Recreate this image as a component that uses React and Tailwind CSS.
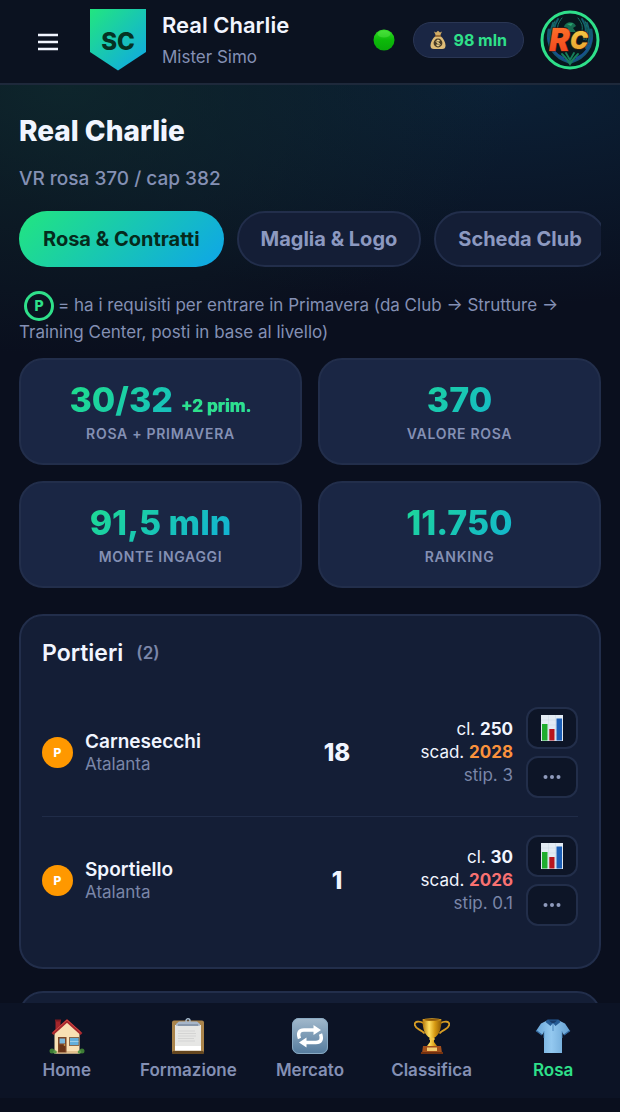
import React, { useState } from 'react';

const tabs = ['Rosa & Contratti', 'Maglia & Logo', 'Scheda Club'];

const stats = [
    { value: '30/32', extra: '+2 prim.', label: 'Rosa + Primavera' },
    { value: '370', label: 'Valore Rosa' },
    { value: '91,5 mln', label: 'Monte Ingaggi' },
    { value: '11.750', label: 'Ranking' },
];

const keepers = [
    { name: 'Carnesecchi', team: 'Atalanta', rating: 18, clause: '250', expiry: '2028', salary: '3', expiryClass: 'text-[#fb923c]' },
    { name: 'Sportiello', team: 'Atalanta', rating: 1, clause: '30', expiry: '2026', salary: '0.1', expiryClass: 'text-[#f87171]' },
];

const HomeIcon = () => (
    <svg viewBox="0 0 36 36" className="h-9 w-9" aria-hidden="true">
        <path d="M6.5 2h5v11h-5z" fill="#a5262b" />
        <path d="M6 1.5h6v2H6z" fill="#7d1a20" />
        <path d="M5.500 15 18 3.500 30.500 15V35.500H5.500z" fill="#f8e0b4" />
        <path d="M5.500 33h25v2.500h-25z" fill="#e2c08d" />
        <path d="M3.500 16 18 3l14.500 13" fill="none" stroke="#a8282d" strokeWidth="2.800" />
        <path d="M4.500 14 18 2l13.500 12" fill="none" stroke="#cf4a44" strokeWidth="1" />
        <path d="M9 19h8.500v15.500H9z" fill="#7c4526" />
        <path d="M10.500 20.500h5.500v5h-5.500z" fill="#79b7dc" />
        <path d="M10.500 27h5.500v7h-5.500z" fill="#693417" />
        <circle cx="15.500" cy="27" r=".8" fill="#e7bd55" />
        <path d="M20 19h10.500v9H20z" fill="#8a6a4c" />
        <path d="M21 20h8.500v7H21z" fill="#62aedb" />
        <path d="M21 23.500h8.500" stroke="#a7d5ec" strokeWidth=".8" />
        <circle cx="3" cy="33" r="2.500" fill="#3d7c35" />
        <circle cx="6" cy="34" r="1.800" fill="#59994a" />
        <circle cx="33" cy="33" r="2.500" fill="#3d7c35" />
        <circle cx="30.500" cy="34" r="1.800" fill="#59994a" />
    </svg>
);

const ClipboardIcon = () => (
    <svg viewBox="0 0 36 36" className="h-9 w-9" aria-hidden="true">
        <rect x="2" y="2.500" width="32" height="33.500" rx="2" fill="#aa844b" />
        <rect x="2" y="33" width="32" height="3" rx="1.500" fill="#654720" />
        <path d="M5 7h26v25.500H5z" fill="#e6e6e4" />
        <path d="M5 28h26v4.500H5z" fill="#fff" />
        <path d="M8 13h17M8 15.500h18M8 18h18M8 20.500h16M8 23h17" stroke="#d4d4d3" strokeWidth="1.200" />
        <circle cx="18" cy="2.800" r="2" fill="none" stroke="#a9bdd0" strokeWidth="1.400" />
        <path d="M9 3.500h18l3 2.500c.5 1-.2 2-1.500 2h-21C6 8 5.500 7 6 6z" fill="#a7b6c9" />
        <path d="M8 7h20" stroke="#69798d" strokeWidth="1" />
    </svg>
);

const RepeatIcon = () => (
    <svg viewBox="0 0 36 36" className="h-9 w-9" aria-hidden="true">
        <defs>
            <linearGradient id="repeat-bg" x2="0" y2="1">
                <stop stopColor="#a2b9cc" />
                <stop offset="1" stopColor="#557b9d" />
            </linearGradient>
        </defs>
        <rect width="36" height="36" rx="7" fill="url(#repeat-bg)" />
        <rect x=".5" y=".5" width="35" height="35" rx="6.500" fill="none" stroke="#89a9c2" />
        <path d="M7.500 20.500c-2-5-.5-8.500 4.500-8.500h11M28.500 16c2 5 .5 8.500-4.500 8.500H13" fill="none" stroke="#fff" strokeWidth="3.400" />
        <path d="m21.500 7 7.500 5-7.500 5zM14.500 19.500v10l-7.500-5z" fill="#fff" />
    </svg>
);

const TrophyIcon = () => (
    <svg viewBox="0 0 36 36" className="h-9 w-9" aria-hidden="true">
        <defs>
            <linearGradient id="cup" x2="1" y2="0">
                <stop stopColor="#b17508" />
                <stop offset=".35" stopColor="#ffe061" />
                <stop offset=".65" stopColor="#d79a12" />
                <stop offset="1" stopColor="#8c5804" />
            </linearGradient>
        </defs>
        <path d="M9.500 5C5 2.500 0 3.500.8 7c.8 4.500 6 4 9.700 8.500M26.500 5C31 2.500 36 3.500 35.200 7c-.8 4.500-6 4-9.700 8.500" fill="none" stroke="#d79d25" strokeWidth="1.800" />
        <path d="M8.500 1.500h19c0 9-2 15.500-7.500 18.500v4l3 4H13l3-4v-4C10.500 17 8.500 10.500 8.500 1.500z" fill="url(#cup)" />
        <ellipse cx="18" cy="1.800" rx="9.500" ry="1.500" fill="#e6ac28" />
        <ellipse cx="18" cy="1.900" rx="8" ry=".8" fill="#875205" />
        <ellipse cx="18" cy="21" rx="3" ry="1.300" fill="#f2c444" />
        <path d="M9 28h18l1 7H8z" fill="#a34f1b" />
        <path d="M13 29.500h10v3.500H13z" fill="#f1cb70" />
        <path d="M7 34h22v2H7z" fill="#74310f" />
    </svg>
);

const ShirtIcon = () => (
    <svg viewBox="0 0 36 36" className="h-9 w-9" aria-hidden="true">
        <defs>
            <linearGradient id="shirt" x2="1" y2="0">
                <stop stopColor="#69a6d8" />
                <stop offset=".45" stopColor="#94c9f0" />
                <stop offset="1" stopColor="#649fd0" />
            </linearGradient>
        </defs>
        <path d="M12 2.500h12l6 3L35 13l-6 4-2-3v21H9V14l-2 3-6-4 5-7.500z" fill="url(#shirt)" />
        <path d="M1 12.500 7 17M35 12.500 29 17" stroke="#34699f" strokeWidth="1.200" />
        <path d="M12.500 1.500h11l2 2.500-5 4-2.500-3-2.500 3-5-4z" fill="#255b94" />
        <path d="M14 2.500h8L18 6z" fill="#173a68" />
        <path d="M18 5v8" stroke="#4c86bd" strokeWidth="1" />
        <path d="M9 13v7M27 13v7" stroke="#5794c9" strokeWidth=".8" />
    </svg>
);

const MoneyBagIcon = () => (
    <svg viewBox="0 0 16 20" className="h-5 w-4" aria-hidden="true">
        <path d="M4 1.500 6 2.500 8 .8l2 1.700 2-1-2 4.500H6z" fill="#d1ac65" />
        <path d="M5.500 6h5c3 2.500 5 6 5 9.500 0 2.500-1 3.500-3.500 3.500H4C1.500 19 .5 18 .5 15.500.5 12 2.500 8.500 5.500 6z" fill="#dfbd78" />
        <path d="M5 6h6" stroke="#8d5d29" strokeWidth="1.500" />
        <circle cx="8" cy="13" r="4.400" fill="#483b26" />
        <path d="M10 11.200C9.500 10.200 6.200 10 6.200 11.600c0 1.700 3.800 1 3.800 2.800 0 1.600-3.500 1.500-4 .2M8 9.500v7" fill="none" stroke="#efd48f" strokeWidth="1" />
    </svg>
);

const ChartIcon = () => (
    <svg viewBox="0 0 22 26" className="h-[26px] w-[22px]" aria-hidden="true">
        <path d="M0 0h22v26H0z" fill="#e3ebf4" />
        <path d="M0 5h22M0 10h22M0 15h22M0 20h22M7.500 0v26M14.500 0v26" stroke="#c8d6e5" strokeWidth=".5" />
        <path d="M1 9h5.500v16.500H1z" fill="#1fae2e" />
        <path d="M8.300 14h5.200v11.500H8.300z" fill="#b9151d" />
        <path d="M15.500 3.500H21v22h-5.500z" fill="#1b5fb8" />
    </svg>
);

const ClubLogo = () => (
    <svg viewBox="0 0 60 60" className="h-[60px] w-[60px]" role="img" aria-label="RC">
        <defs>
            <linearGradient id="logo-r" x2="0" y2="1">
                <stop stopColor="#ff7a2a" />
                <stop offset="1" stopColor="#ee3d1c" />
            </linearGradient>
            <linearGradient id="logo-c" x2="0" y2="1">
                <stop stopColor="#f6cf48" />
                <stop offset="1" stopColor="#e79a2b" />
            </linearGradient>
        </defs>
        <circle cx="30" cy="30" r="28" fill="#07171d" stroke="#2fe08a" strokeWidth="3" />
        <g fill="none" strokeLinecap="round">
            <path d="M9 20c-3 16 6 28 20 32M51 20c3 16-6 28-20 32" stroke="#145873" strokeWidth="3" />
            <path d="M13 13c-4 10-3 18 1 25M18 9c-5 8-5 14-2 20M47 13c4 10 3 18-1 25M42 9c5 8 5 14 2 20" stroke="#125f6c" strokeWidth="2" />
            <path d="M8 28c2 10 8 17 16 20M52 28c-2 10-8 17-16 20M11 35c3 7 9 13 16 16M49 35c-3 7-9 13-16 16" stroke="#185090" strokeWidth="1.500" />
            <path d="M15 11c-3 7-3 13-1 19M45 11c3 7 3 13 1 19M22 8c-4 5-5 8-4 13M38 8c4 5 5 8 4 13" stroke="#1a7868" strokeWidth="1" />
            <path d="M22 44c3 3 6 6 8 10 2-4 5-7 8-10M26 43l4 7 4-7" stroke="#17805b" strokeWidth="1.800" />
        </g>
        <path d="M24 17c1-5 9-7 12-1l-3 2 3 4H24l4-4z" fill="#176c50" />
        <path d="m27 14 6-1-2 3z" fill="#2daa72" />
        <text x="9" y="41" fontFamily="Inter, sans-serif" fontSize="31" fontWeight="900" fontStyle="italic" fill="url(#logo-r)" stroke="#54150c" strokeWidth="1" paintOrder="stroke">R</text>
        <text x="30" y="39" fontFamily="Inter, sans-serif" fontSize="24" fontWeight="900" fontStyle="italic" fill="url(#logo-c)" stroke="#3c2110" strokeWidth="1.500" paintOrder="stroke">C</text>
    </svg>
);

const navItems = [
    { name: 'Home', icon: HomeIcon },
    { name: 'Formazione', icon: ClipboardIcon },
    { name: 'Mercato', icon: RepeatIcon },
    { name: 'Classifica', icon: TrophyIcon },
    { name: 'Rosa', icon: ShirtIcon },
];

const Header = () => (
    <header className="flex h-[85px] shrink-0 items-center border-b-2 border-[#1e293b] bg-[#0b1220] pr-5 pb-1 pl-8">
        <button className="flex h-8 w-8 items-center justify-center text-[#f1f5ff]" aria-label="Menu">
            <svg viewBox="0 0 20 18" className="mt-1 h-[18px] w-5" fill="none" stroke="currentColor" strokeWidth="2.600" aria-hidden="true">
                <path d="M0 2h20M0 9h20M0 16h20" />
            </svg>
        </button>
        <div className="ml-[26px] flex h-[62px] w-14 shrink-0 items-center justify-center bg-[linear-gradient(135deg,#22e67f,#0ea5e9)] pt-1 text-2xl font-extrabold text-[#053223] [clip-path:polygon(0_0,100%_0,100%_70%,50%_100%,0_70%)]">
            SC
        </div>
        <div className="ml-4 min-w-0 flex-1 pt-0.5">
            <p className="truncate text-[22px] leading-8 font-semibold text-[#f1f5ff]">Real Charlie</p>
            <p className="truncate text-[17px] leading-8 text-[#8490b4]">Mister Simo</p>
        </div>
        <svg viewBox="0 0 22 22" className="h-[22px] w-[22px] shrink-0" role="img" aria-label="Online">
            <defs>
                <linearGradient id="online" x2="0" y2="1">
                    <stop stopColor="#35dc28" />
                    <stop offset=".5" stopColor="#0cba09" />
                    <stop offset="1" stopColor="#09a80a" />
                </linearGradient>
            </defs>
            <circle cx="11" cy="11" r="10.500" fill="url(#online)" />
            <ellipse cx="11" cy="5" rx="6.500" ry="3.500" fill="#6cf05c" opacity=".35" />
        </svg>
        <div className="ml-[18px] flex h-9 items-center gap-2 rounded-full border border-[#2a3654] bg-[#1a2644] px-4 text-base font-bold whitespace-nowrap text-[#2fe08a]">
            <MoneyBagIcon />
            98 mln
        </div>
        <button className="ml-4 shrink-0" aria-label="Profilo">
            <ClubLogo />
        </button>
    </header>
);

const StatCard = ({ value, extra, label }) => (
    <div className="rounded-3xl border-2 border-[#222e4b] bg-[#1a2644] px-5 pt-[18px] pb-[17px] text-center">
        <p className="bg-[linear-gradient(135deg,#22e67f,#0ea5e9)] bg-clip-text text-[34px] leading-[44px] font-extrabold text-transparent">
            {value}
            {extra && <span className="ml-2 text-[17px] leading-none text-[#2fe08a]">{extra}</span>}
        </p>
        <p className="text-sm leading-6 font-semibold tracking-wider text-[#8490b4] uppercase">{label}</p>
    </div>
);

const PlayerRow = ({ player }) => (
    <li className="flex items-center border-b border-[#202c48] py-[18px] last:border-b-0">
        <span className="flex h-[31px] w-[31px] shrink-0 items-center justify-center rounded-full bg-[#ff9800] text-xs font-extrabold text-white">P</span>
        <div className="ml-3 min-w-0 flex-1">
            <p className="truncate text-[19px] leading-[22px] font-semibold text-[#f1f5ff]">{player.name}</p>
            <p className="truncate text-[17px] leading-[22px] text-[#7a86a8]">{player.team}</p>
        </div>
        <span className="w-14 shrink-0 text-center text-2xl font-extrabold text-[#f1f5ff]">{player.rating}</span>
        <div className="w-[148px] shrink-0 text-right text-[17px] leading-[23px] text-[#f1f5ff]">
            <p>cl. <b>{player.clause}</b></p>
            <p>scad. <b className={player.expiryClass}>{player.expiry}</b></p>
            <p className="text-[#7a86a8]">stip. {player.salary}</p>
        </div>
        <div className="ml-[13px] flex shrink-0 flex-col gap-[7px]">
            <button className="flex h-[42px] w-[52px] items-center justify-center rounded-xl border-2 border-[#222e4a] bg-[#0d1527]" aria-label="Statistiche">
                <ChartIcon />
            </button>
            <button className="flex h-[42px] w-[52px] items-center justify-center rounded-xl border-2 border-[#222e4a] bg-[#0d1527] text-[#8f9bbd]" aria-label="Altro">
                <svg viewBox="0 0 18 4" className="h-1 w-[18px]" fill="currentColor" aria-hidden="true">
                    <circle cx="2.500" cy="2" r="2" />
                    <circle cx="9" cy="2" r="2" />
                    <circle cx="15.500" cy="2" r="2" />
                </svg>
            </button>
        </div>
    </li>
);

const App = () => {
    const [activeTab, setActiveTab] = useState(tabs[0]);

    return (
        <div className="flex h-screen flex-col overflow-hidden bg-[#0a0f1e] font-[Inter,sans-serif]">
            <Header />

            <main className="min-h-0 flex-1 overflow-y-auto bg-[radial-gradient(ellipse_460px_270px_at_10%_0,#0f2a2ecc_0%,transparent_100%),radial-gradient(ellipse_560px_220px_at_80%_0,#0b2036_0%,transparent_100%)] px-[19px] pt-[26px] [scrollbar-width:none]">
                <h1 className="text-[28px] leading-10 font-extrabold text-[#f1f5ff]">Real Charlie</h1>
                <p className="mt-4 text-[19px] leading-6 font-medium text-[#8490b4]">VR rosa 370 / cap 382</p>

                <div className="mt-5 flex gap-[13px] overflow-x-auto [scrollbar-width:none]">
                    {tabs.map((tab) => (
                        <button
                            key={tab}
                            onClick={() => setActiveTab(tab)}
                            className={`h-14 shrink-0 rounded-full border-2 px-[22px] text-xl font-bold ${
                                tab === activeTab
                                    ? 'border-transparent bg-[linear-gradient(135deg,#22e67f,#0ea5e9)] bg-origin-border text-[#052a1c]'
                                    : 'border-[#222e4b] bg-[#141e36] text-[#8c99c0]'
                            }`}
                        >
                            {tab}
                        </button>
                    ))}
                </div>

                <p className="mt-[25px] text-[17px] leading-[27px] text-[#8490b4]">
                    <span className="-my-1 mr-1 ml-[5px] inline-flex h-[30px] w-[30px] items-center justify-center rounded-full border-3 border-[#2fe08a] align-middle text-sm leading-none font-extrabold text-[#2fe08a]">P</span>
                    = ha i requisiti per entrare in Primavera (da Club → Strutture → Training Center, posti in base al livello)
                </p>

                <div className="mt-3 grid grid-cols-2 gap-4">
                    {stats.map((stat) => (
                        <StatCard key={stat.label} {...stat} />
                    ))}
                </div>

                <section className="mt-[26px] rounded-3xl border-2 border-[#222e4b] bg-[#141e36] px-[21px] pt-[19px] pb-[23px]">
                    <h2 className="flex items-center gap-[13px] text-[23px] leading-9 font-semibold text-[#f1f5ff]">
                        Portieri
                        <span className="text-[17px] text-[#7a86a8]">(2)</span>
                    </h2>
                    <ul className="mt-[18px]">
                        {keepers.map((player) => (
                            <PlayerRow key={player.name} player={player} />
                        ))}
                    </ul>
                </section>

                <section className="mt-[22px] h-40 rounded-3xl border-2 border-[#222e4b] bg-[#141e36]" />
            </main>

            <nav className="flex h-[109px] shrink-0 border-b-[14px] border-[#0a0f1e] bg-[#0c1325] px-[6px] pt-[15px]">
                {navItems.map((item) => (
                    <a
                        key={item.name}
                        href="#"
                        className={`flex flex-1 flex-col items-center gap-1 text-[17px] leading-6 font-semibold ${
                            item.name === 'Rosa' ? 'text-[#2fe08a]' : 'text-[#8490b4]'
                        }`}
                    >
                        <item.icon />
                        {item.name}
                    </a>
                ))}
            </nav>
        </div>
    );
};

export default App;
